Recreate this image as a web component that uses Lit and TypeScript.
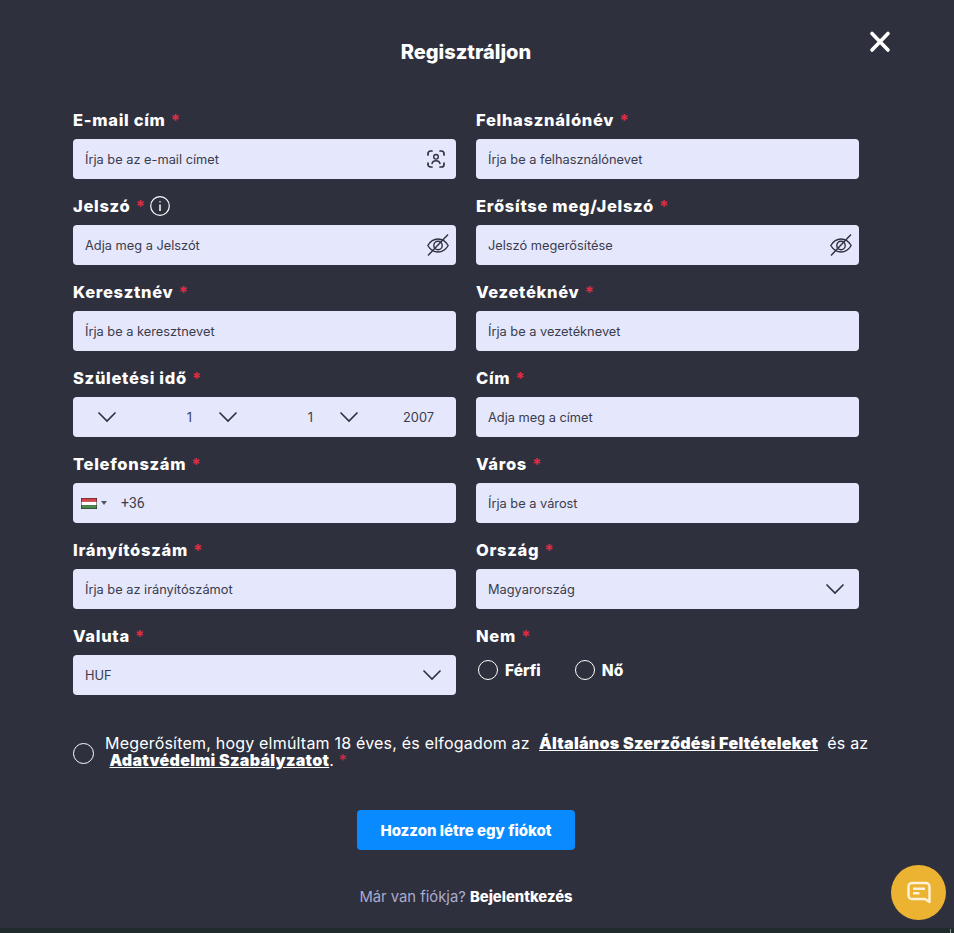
import { LitElement, html, css } from "lit";
import { customElement } from "lit/decorators.js";

const chevron = html`<svg class="chev" viewBox="0 0 20 12" width="20" height="12"><path d="M1.500 1.500 10 10l8.500-8.500" fill="none" stroke="#2e303e" stroke-width="1.600"/></svg>`;
const eye = html`<svg class="eye" viewBox="0 0 22 22" width="22" height="22" fill="none" stroke="#2e303e" stroke-width="1.400"><path d="M.8 11.500C3.300 7.300 6.800 5 11 5s7.700 2.300 10.200 6.500C18.700 15.700 15.200 18 11 18S3.300 15.700.8 11.500Z"/><circle cx="11" cy="11.500" r="4.200"/><path d="M21 .5 1 21.500"/></svg>`;
const face = html`<svg class="face" viewBox="0 0 18 18" width="18" height="18" fill="none" stroke="#2e303e" stroke-width="1.700" stroke-linecap="round"><path d="M5 1H3.500A2.500 2.500 0 0 0 1 3.500V5M13 1h1.500A2.500 2.500 0 0 1 17 3.500V5M1 13v1.500A2.500 2.500 0 0 0 3.500 17H5M17 13v1.500a2.500 2.500 0 0 1-2.500 2.500H13"/><circle cx="9" cy="6.800" r="2.300" stroke-width="1.400"/><path d="M5 13.500c.5-1.900 2.100-2.800 4-2.800s3.500.9 4 2.800" stroke-width="1.400"/></svg>`;

type F = { label: string; ph: string; icon?: unknown; info?: boolean };

@customElement("app-root")
export class AppRoot extends LitElement {
  static styles = css`
    :host { display: block; width: 954px; height: 933px; background: #2e303e; position: relative; overflow: hidden; font-family: "Inter", "Liberation Sans", sans-serif; color: #fff; }
    .page { padding: 0 95px 0 73px; display: flex; flex-direction: column; }
    h1 { margin: 0; height: 110px; padding-top: 41px; box-sizing: border-box; text-align: center; font-size: 20px; line-height: 23px; font-weight: 800; }
    .close { position: absolute; left: 868px; top: 30px; }
    .grid { display: grid; grid-template-columns: 383px 383px; column-gap: 20px; grid-auto-rows: 86px; }
    .field { display: flex; flex-direction: column; }
    label { height: 29px; box-sizing: border-box; padding-bottom: 10px; display: flex; align-items: center; gap: 5px; font-size: 16.500px; font-weight: 800; letter-spacing: .7px; line-height: 20px; }
    .req { color: #dc2c44; }
    .info { margin-left: -1px; }
    .box { height: 40px; border-radius: 4px; background: #e5e7fd; display: flex; align-items: center; justify-content: space-between; padding: 0 7px 0 12px; font-size: 12.800px; color: #3a3c4c; box-sizing: border-box; }
    .face { margin-right: 4px; }
    .cw { margin-right: 7px; display: flex; }
    .date { padding: 0 22px 0 24px; }
    .date .seg { display: flex; align-items: center; justify-content: space-between; }
    .date .seg:nth-child(1), .date .seg:nth-child(2) { width: 121px; }
    .date .seg:nth-child(1) span, .date .seg:nth-child(2) span { margin-right: 26px; }
    .date .seg:nth-child(3) { flex: 1; }
    .tel { justify-content: flex-start; padding: 0 8px; font-family: "Roboto", sans-serif; font-size: 14px; }
    .flag { width: 16px; height: 11px; display: block; margin-right: 4px; }
    .caret { width: 0; height: 0; border: 3px solid transparent; border-top: 4px solid #555; border-bottom: 0; margin-right: 14px; }
    .radios { height: 30px; display: flex; align-items: center; gap: 34px; padding-left: 2px; }
    .radio { display: flex; align-items: center; gap: 7px; font-size: 15.500px; font-weight: 800; }
    .dot { width: 18px; height: 18px; border: 1.500px solid #fff; border-radius: 50%; display: block; }
    .terms { display: flex; align-items: center; gap: 11px; margin-top: 23px; }
    .terms .dot { flex: none; width: 19px; height: 19px; margin-top: 2px; }
    .terms p { flex: none; margin: 0; font-size: 16px; letter-spacing: .2px; line-height: 17px; width: 775px; }
    .terms a { color: #fff; font-weight: 900; letter-spacing: .3px; text-decoration: underline; margin: 0 4.500px; }
    .terms a.last { margin-right: 0; }
    .btn-row { display: flex; justify-content: center; margin-top: 41px; }
    button { width: 218px; height: 40px; border: 0; border-radius: 4px; background: #0a8aff; color: #fff; font: 800 15px "Inter", sans-serif; }
    .login { margin: 38px 0 0; text-align: center; font-size: 14.800px; line-height: 18px; color: #a9abce; }
    .login b { color: #fff; font-weight: 800; }
    .chat { position: absolute; left: 891px; top: 865px; width: 55px; height: 55px; border-radius: 50%; background: #ecb232; display: flex; align-items: center; justify-content: center; }
    .strip { position: absolute; left: 0; right: 0; bottom: 0; height: 5px; background: #1f2b2d; }
    .strip::after { content: ""; position: absolute; left: 950px; top: 1px; width: 1px; height: 4px; background: #8a8f8f; }
  `;

  field(f: F) {
    return html`<div class="field">
      <label>${f.label} <span class="req">*</span>${f.info ? html`<svg class="info" viewBox="0 0 20 20" width="20" height="20" fill="none" stroke="#fff"><circle cx="10" cy="10" r="9.300" stroke-width="1.200"/><path d="M10 8.500V15" stroke-width="1.500"/><circle cx="10" cy="5.800" r=".8" fill="#fff" stroke="none"/></svg>` : ""}</label>
      <div class="box"><span>${f.ph}</span>${f.icon ?? ""}</div>
    </div>`;
  }

  render() {
    return html`<div class="page">
      <h1>Regisztráljon</h1>
      <svg class="close" viewBox="0 0 24 24" width="24" height="24"><path d="M4 3.500 20 20M20 3.500 4 20" stroke="#fff" stroke-width="3.600" stroke-linecap="round"/></svg>
      <div class="grid">
        ${this.field({ label: "E-mail cím", ph: "Írja be az e-mail címet", icon: face })}
        ${this.field({ label: "Felhasználónév", ph: "Írja be a felhasználónevet" })}
        ${this.field({ label: "Jelszó", ph: "Adja meg a Jelszót", icon: eye, info: true })}
        ${this.field({ label: "Erősítse meg/Jelszó", ph: "Jelszó megerősítése", icon: eye })}
        ${this.field({ label: "Keresztnév", ph: "Írja be a keresztnevet" })}
        ${this.field({ label: "Vezetéknév", ph: "Írja be a vezetéknevet" })}
        <div class="field">
          <label>Születési idő <span class="req">*</span></label>
          <div class="box date">
            <div class="seg">${chevron}<span>1</span></div>
            <div class="seg">${chevron}<span>1</span></div>
            <div class="seg">${chevron}<span>2007</span></div>
          </div>
        </div>
        ${this.field({ label: "Cím", ph: "Adja meg a címet" })}
        <div class="field">
          <label>Telefonszám <span class="req">*</span></label>
          <div class="box tel">
            <svg class="flag" viewBox="0 0 16 11"><rect width="16" height="11" fill="#222"/><rect x=".5" y=".5" width="15" height="3.300" fill="#d8434a"/><rect x=".5" y="3.800" width="15" height="3.400" fill="#fff"/><rect x=".5" y="7.200" width="15" height="3.300" fill="#4a8a4e"/></svg>
            <i class="caret"></i><span>+36</span>
          </div>
        </div>
        ${this.field({ label: "Város", ph: "Írja be a várost" })}
        ${this.field({ label: "Irányítószám", ph: "Írja be az irányítószámot" })}
        ${this.field({ label: "Ország", ph: "Magyarország", icon: html`<span class="cw">${chevron}</span>` })}
        ${this.field({ label: "Valuta", ph: "HUF", icon: html`<span class="cw">${chevron}</span>` })}
        <div class="field">
          <label>Nem <span class="req">*</span></label>
          <div class="radios">
            <div class="radio"><i class="dot"></i>Férfi</div>
            <div class="radio"><i class="dot"></i>Nő</div>
          </div>
        </div>
      </div>
      <div class="terms">
        <i class="dot"></i>
        <p>Megerősítem, hogy elmúltam 18 éves, és elfogadom az <a>Általános Szerződési Feltételeket</a> és az<br><a class="last">Adatvédelmi Szabályzatot</a>. <span class="req">*</span></p>
      </div>
      <div class="btn-row"><button>Hozzon létre egy fiókot</button></div>
      <p class="login">Már van fiókja? <b>Bejelentkezés</b></p>
    </div>
    <div class="chat"><svg viewBox="0 0 24 24" width="24" height="24" fill="none" stroke="#fdf3d8" stroke-width="2.400"><path d="M5 2h14a3.500 3.500 0 0 1 3.500 3.500V21l-4.500-3H5a3.500 3.500 0 0 1-3.500-3.500v-9A3.500 3.500 0 0 1 5 2Z" stroke-linejoin="round"/><path d="M6 7.800h12M6 12.200h6.500"/></svg></div>
    <div class="strip"></div>`;
  }
}
